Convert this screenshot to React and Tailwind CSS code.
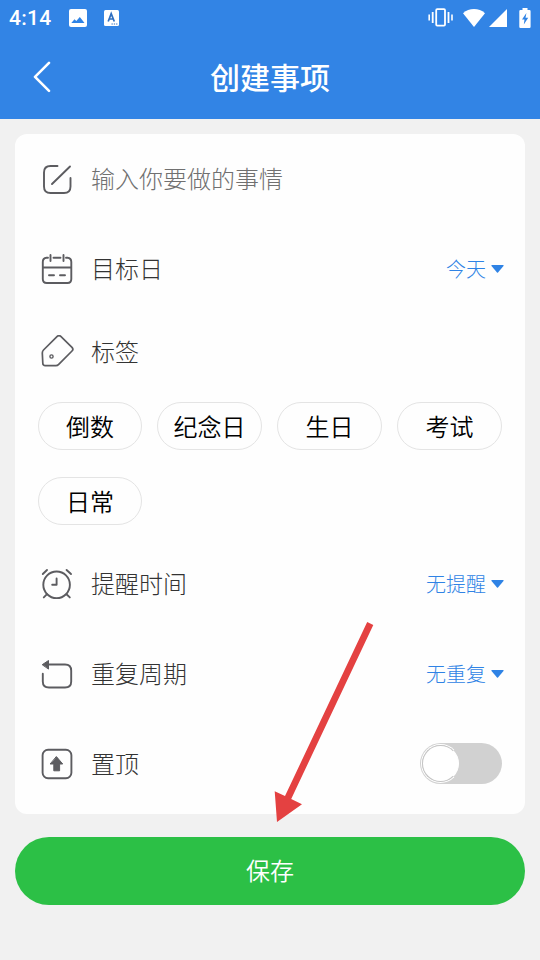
import React from 'react';

const tags = ['倒数', '纪念日', '生日', '考试', '日常'];

function Icon({ children }) {
  return (
    <svg
      className="w-[34px] h-[34px] shrink-0 text-[#5c5c60]"
      viewBox="0 0 34 34"
      fill="none"
      stroke="currentColor"
      strokeWidth="1.9"
      strokeLinecap="round"
      strokeLinejoin="round"
    >
      {children}
    </svg>
  );
}

const EditIcon = () => (
  <Icon>
    <path d="M17.5 4H10.5Q4 4 4 10.5V24.5Q4 31 10.5 31H24Q30.5 31 30.5 24.5V16M12 22L30 4.5" />
  </Icon>
);

const CalendarIcon = () => (
  <Icon>
    <path d="M8 5.7H6.5Q2.8 6 2.8 10V27Q2.8 31 6.8 31H27.5Q31.3 31 31.3 27V10Q31.3 6 27.5 5.7H26M13.5 5.7H20.5M2.8 15.5H31.3" />
    <path d="M10.5 3V9M23.5 3V9M9 23.2H14M20 23.2H25" />
  </Icon>
);

const TagIcon = () => (
  <Icon>
    <path
      strokeWidth="1.7"
      d="M17.2 1.4Q19 -0.1 20.8 1.4L32 12.3Q33.8 14.2 32 16L18.7 29.3Q17.5 30.6 15.8 30.6H5.3Q2.8 30.6 2.8 28.2L2.3 18Q2.3 16.2 3.5 15Z"
    />
    <circle cx="11.5" cy="21.5" r="1.6" strokeWidth="1.4" />
  </Icon>
);

const ClockIcon = () => (
  <Icon>
    <circle cx="16.6" cy="17.8" r="13.3" />
    <path d="M16.6 11.5V17.8H12.2M2.8 7L7 3M26.6 3L31 7M7 27.2L3.8 30.4M26.5 27.2L29.8 30.4" />
  </Icon>
);

const RepeatIcon = () => (
  <Icon>
    <path d="M8 7.5H25Q31.2 7.5 31.2 13.7V24.5Q31.2 30.5 25 30.5H9Q2.8 30.5 2.8 24.5V16.8" />
    <path d="M2.5 7.5L8.5 3.5V11.7Z" fill="currentColor" strokeWidth="1" />
  </Icon>
);

const PinTopIcon = () => (
  <Icon>
    <rect x="2.6" y="2.8" width="28.8" height="28.4" rx="5.5" />
    <path d="M16.6 9.8L22.7 17H19.6V23.8H13.8V17H10.5Z" fill="currentColor" strokeWidth="1" />
  </Icon>
);

function Row({ icon, label, labelClass = 'text-[#333]', children }) {
  return (
    <div className="flex h-[90px] items-center pl-[25px] pr-[21px]">
      {icon}
      <span className={`ml-[17px] pb-[2px] text-[24px] leading-none font-light ${labelClass}`}>{label}</span>
      <div className="ml-auto flex items-center">{children}</div>
    </div>
  );
}

function Picker({ value }) {
  return (
    <div className="flex items-center gap-[5px] text-[#2f83e5]">
      <span className="text-[20px] leading-none font-light">{value}</span>
      <svg className="h-[8px] w-[13px]" viewBox="0 0 13 8" fill="currentColor">
        <path d="M0.8 0H12.2Q13 0.3 12.5 1L7 7.6Q6.5 8 6 7.6L0.5 1Q0 0.3 0.8 0Z" />
      </svg>
    </div>
  );
}

function Toggle() {
  return (
    <div className="mr-[2px] mb-[2px] flex h-[41px] w-[82px] items-center rounded-full bg-[#d1d1d1] pl-px">
      <div className="flex h-[39px] w-[39px] items-center justify-center rounded-full border border-white border-r-transparent">
        <div className="h-[37px] w-[37px] rounded-full border border-[#c4c4c4] border-r-white bg-white"></div>
      </div>
    </div>
  );
}

function StatusBar() {
  return (
    <div className="flex h-[36px] items-center pl-[9px] pr-[9px]">
      <span className="pt-px font-[Roboto] text-[21px] leading-none font-medium tracking-[0.3px]">4:14</span>
      <svg className="ml-[17px] h-[18px] w-[18px]" viewBox="0 0 18 18">
        <rect width="18" height="18" rx="2" fill="#fff" />
        <path d="M2.3 14L5.5 10.3L7.3 12L10.8 8L12.8 10.5L15.5 14Z" fill="#2f83e5" />
      </svg>
      <svg className="ml-[17px] h-[16px] w-[15px]" viewBox="0 0 15 16">
        <rect width="15" height="16" rx="1.5" fill="#fff" />
        <path d="M4.2 11.5L7.2 3.7L10.3 11.5M5.3 9H9.2" fill="none" stroke="#2f6fc0" strokeWidth="1.7" />
        <path d="M7.5 14H14" stroke="#2f6fc0" strokeWidth="1.1" strokeDasharray="1.3 1" />
      </svg>

      <div className="ml-auto flex items-center pb-px">
        <svg className="h-[19px] w-[25px]" viewBox="0 0 25 19" fill="none" stroke="#fff">
          <rect x="8.2" y="1.2" width="8.8" height="16.4" rx="1" strokeWidth="1.8" />
          <path d="M4.7 4V15M20.5 4V15" strokeWidth="1.8" />
          <path d="M1.2 6.5V12.5M24 6.5V12.5" strokeWidth="1.6" />
        </svg>
        <svg className="ml-[10px] h-[18px] w-[22px]" viewBox="0 0 22 18" fill="#fff">
          <path d="M11 18L0 4.2Q4.8 0 11 0T22 4.2Z" />
        </svg>
        <svg className="ml-[4px] h-[18px] w-[18px]" viewBox="0 0 18 18" fill="#fff">
          <path d="M18 0V18H0Z" />
        </svg>
        <svg className="ml-[12px] h-[20px] w-[12px]" viewBox="0 0 12 20">
          <path d="M3.5 0H8.5V2H10.5Q11.6 2 11.6 3.2V18.8Q11.6 20 10.5 20H1.4Q0.3 20 0.3 18.8V3.2Q0.3 2 1.4 2H3.5Z" fill="#fff" />
          <path d="M7.4 5L3 11.6H5.5L4.8 16.5L9.2 9.8H6.5Z" fill="#2f83e5" />
        </svg>
      </div>
    </div>
  );
}

export default function App() {
  return (
    <div className="relative h-[960px] w-[540px] overflow-hidden bg-[#f1f1f1] font-['Noto_Sans_CJK_SC',sans-serif]">
      <header className="h-[119px] bg-[#3284e5] text-white">
        <StatusBar />
        <div className="grid h-[81px] grid-cols-[60px_1fr_60px] items-center">
          <svg className="ml-[32px] h-[32px] w-[20px]" viewBox="0 0 20 32" fill="none" stroke="#fff" strokeWidth="2.6" strokeLinecap="round" strokeLinejoin="round">
            <path d="M17 1.8L3 15.8L17 29.8" />
          </svg>
          <h1 className="pb-px text-center text-[30px] leading-none font-medium">创建事项</h1>
        </div>
      </header>

      <main className="px-[15px] pt-[15px]">
        <section className="h-[680px] rounded-[12px] bg-[#fefefe]">
          <Row icon={<EditIcon />} label="输入你要做的事情" labelClass="text-[#707070]" />
          <Row icon={<CalendarIcon />} label="目标日">
            <Picker value="今天" />
          </Row>

          <div className="flex h-[75px] items-center pl-[25px]">
            <TagIcon />
            <span className="ml-[17px] pb-px text-[24px] leading-none font-light text-[#333]">标签</span>
          </div>
          <div className="grid grid-cols-[104px_105px_105px_105px] gap-x-[15px] gap-y-[27px] pt-[13px] pb-[14px] pl-[23px]">
            {tags.map((tag) => (
              <div key={tag} className="flex h-[48px] items-center justify-center rounded-full border border-[#e4e4e4] pb-px text-[24px] leading-none font-[350] text-black">
                {tag}
              </div>
            ))}
          </div>

          <Row icon={<ClockIcon />} label="提醒时间">
            <Picker value="无提醒" />
          </Row>
          <Row icon={<RepeatIcon />} label="重复周期">
            <Picker value="无重复" />
          </Row>
          <Row icon={<PinTopIcon />} label="置顶">
            <Toggle />
          </Row>
        </section>

        <button className="mt-[23px] flex h-[68px] w-full items-center justify-center rounded-full bg-[#2cc046] pb-[2px] text-[24px] leading-none font-[350] text-white">
          保存
        </button>
      </main>

      {/* Pointer to the save button */}
      <svg className="absolute top-[615px] left-[265px] h-[215px] w-[115px]" viewBox="265 615 115 215">
        <path d="M367.2 622L373.3 625L291.2 799L302 804.3L277 822L274.7 791.3L285 796Z" fill="#e44141" />
      </svg>
    </div>
  );
}
